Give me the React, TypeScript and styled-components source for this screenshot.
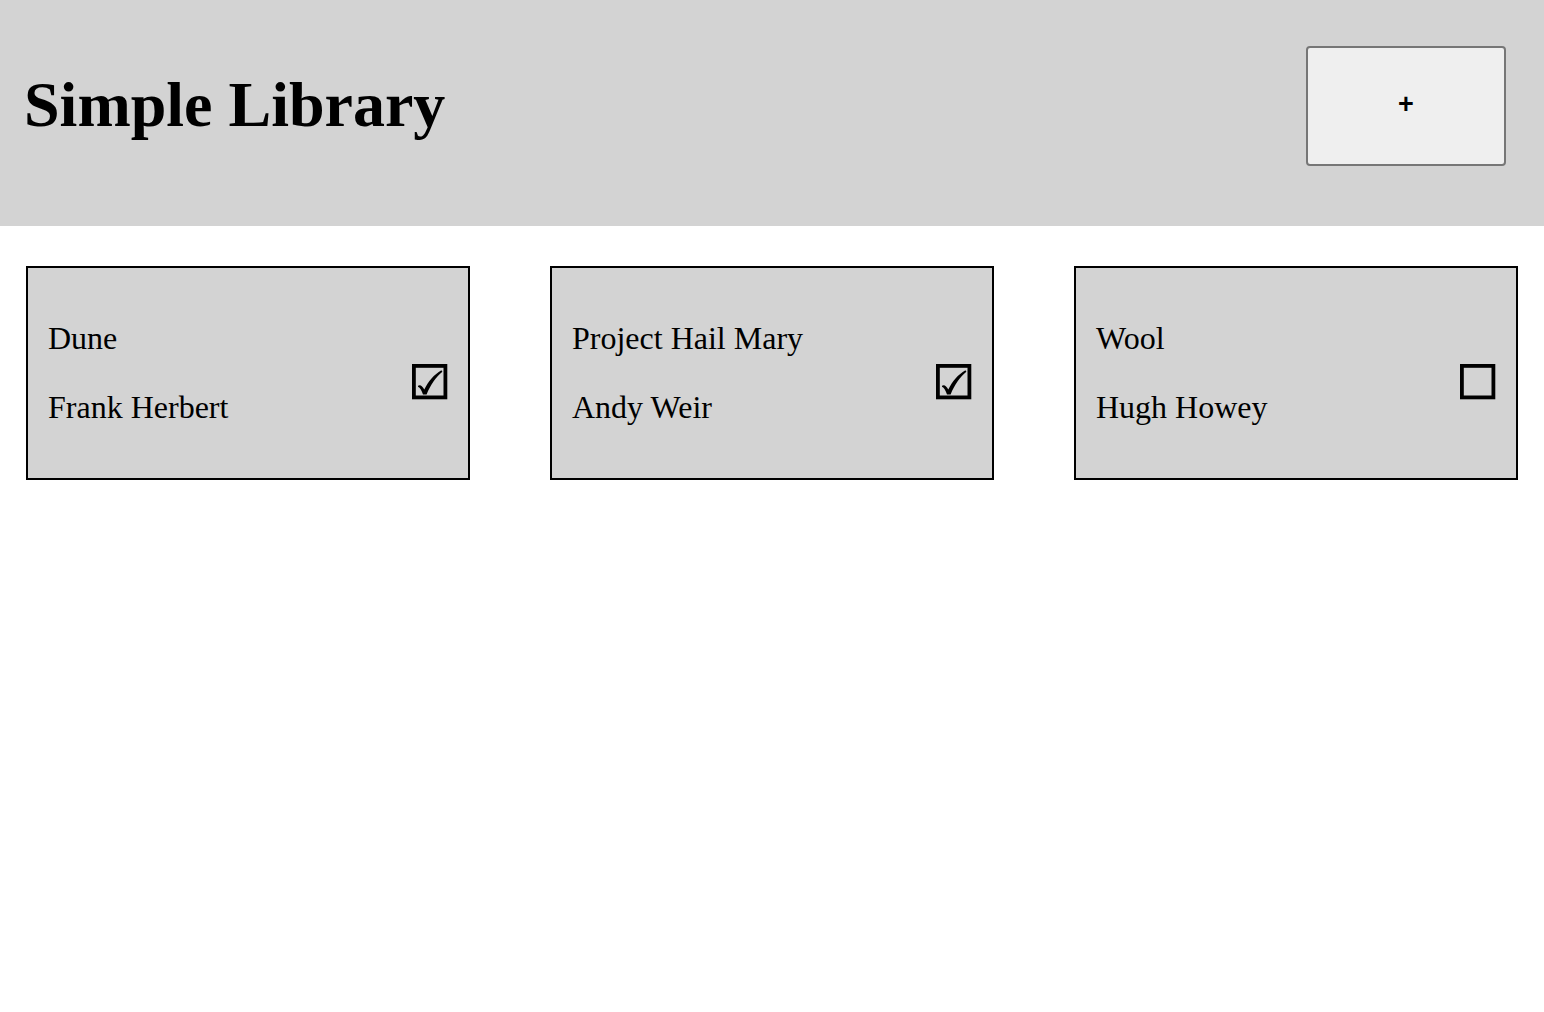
import React from "react";
import styled, { createGlobalStyle } from "styled-components";

const Global = createGlobalStyle`
  html, body { margin: 0; padding: 0; background: #ffffff; }
  body { font-family: "Liberation Serif", "Times New Roman", serif; color: #000; }
`;

const Header = styled.header`
  box-sizing: border-box;
  height: 226px;
  background: #d3d3d3;
  display: flex;
  justify-content: space-between;
  align-items: flex-start;
  padding: 46px 38px 0 24px;
`;

const Title = styled.h1`
  margin: 22px 0 0 0;
  font-family: "Liberation Serif", "Times New Roman", serif;
  font-size: 64px;
  font-weight: bold;
  line-height: normal;
`;

const AddButton = styled.button`
  box-sizing: border-box;
  width: 200px;
  height: 120px;
  background: #efefef;
  border: 2px solid #767676;
  border-radius: 4px;
  font-family: "Liberation Sans", Arial, sans-serif;
  font-size: 27px;
  font-weight: bold;
  line-height: 1;
  color: #000;
  padding: 0 0 4px 0;
  cursor: pointer;
`;

const Shelf = styled.main`
  display: grid;
  grid-template-columns: repeat(3, 1fr);
  column-gap: 80px;
  row-gap: 40px;
  padding: 40px 26px;
`;

const Card = styled.article`
  box-sizing: border-box;
  background: #d3d3d3;
  border: 2px solid #000;
  padding: 20px;
  display: flex;
  justify-content: space-between;
  align-items: center;
`;

const Info = styled.div`
  display: flex;
  flex-direction: column;
`;

const Line = styled.p`
  margin: 32px 0;
  font-size: 32px;
  line-height: normal;
  & + & { margin-top: 0; }
`;

const Toggle = styled.span`
  display: inline-flex;
  width: 36px;
  height: 36px;
  margin-top: 18px;
`;

type Book = { title: string; author: string; read: boolean };

const books: Book[] = [
  { title: "Dune", author: "Frank Herbert", read: true },
  { title: "Project Hail Mary", author: "Andy Weir", read: true },
  { title: "Wool", author: "Hugh Howey", read: false },
];

const CheckIcon = ({ checked }: { checked: boolean }) => (
  <svg width="36" height="36" viewBox="0 0 36 36" aria-hidden="true">
    <rect x="1.9" y="1.9" width="31.5" height="31.5" fill="none" stroke="#000" strokeWidth="3.8" />
    {checked && (
      <path
        d="M6 21.8 C8.4 20.2 10.4 22.4 12.3 25.6 C16 17.4 22.2 10.4 29.4 6.2 L30.4 7.8 C24.2 13 18.6 20.6 14.6 30.4 L11 30.4 C9.6 26.6 8.2 23.6 6 22.8 Z"
        fill="#000"
      />
    )}
  </svg>
);

export default function App() {
  return (
    <>
      <Global />
      <Header>
        <Title>Simple Library</Title>
        <AddButton>+</AddButton>
      </Header>
      <Shelf>
        {books.map((b) => (
          <Card key={b.title}>
            <Info>
              <Line>{b.title}</Line>
              <Line>{b.author}</Line>
            </Info>
            <Toggle>
              <CheckIcon checked={b.read} />
            </Toggle>
          </Card>
        ))}
      </Shelf>
    </>
  );
}
